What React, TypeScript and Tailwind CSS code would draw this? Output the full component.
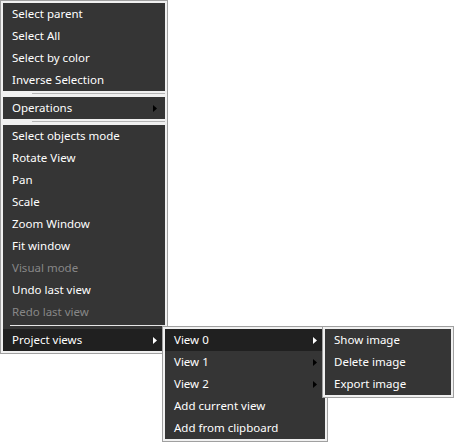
import React from "react";

type Item = { label: string; disabled?: boolean; sub?: boolean; active?: boolean };

const Arrow = ({ active }: { active?: boolean }) => (
  <svg width="4" height="7" viewBox="0 0 4 7" className="ml-auto shrink-0">
    <polygon points="0,0 4,3.5 0,7" fill={active ? "#ffffff" : "#000000"} />
  </svg>
);

const Row = ({ item }: { item: Item }) => (
  <div
    className={`flex items-center h-[22px] pl-[9px] pr-[8px] ${item.active ? "bg-[#202020]" : ""} ${
      item.disabled ? "text-[#878787]" : "text-white"
    }`}
  >
    <span className="leading-[22px] whitespace-nowrap">{item.label}</span>
    {item.sub && <Arrow active={item.active} />}
  </div>
);

const Group = ({ items }: { items: Item[] }) => (
  <div className="bg-[#353535]">
    {items.map((it) => (
      <Row key={it.label} item={it} />
    ))}
  </div>
);

const Sep = () => (
  <div className="h-[6px] pt-[2px] pl-[29px] bg-[#f0f0f0]">
    <div className="h-px bg-[#b4b4b4]" />
  </div>
);

const Panel = ({ children, className }: { children: React.ReactNode; className?: string }) => (
  <div className={`border border-[#a0a0a0] bg-[#f0f0f0] p-[2px] ${className ?? ""}`}>{children}</div>
);

export default function App() {
  return (
    <div
      className="relative w-[454px] h-[442px] bg-white text-[11.5px]"
      style={{ fontFamily: '"Noto Sans", "Open Sans", sans-serif' }}
    >
      <Panel className="w-[168px]">
        <Group
          items={[
            { label: "Select parent" },
            { label: "Select All" },
            { label: "Select by color" },
            { label: "Inverse Selection" },
          ]}
        />
        <Sep />
        <Group items={[{ label: "Operations", sub: true }]} />
        <Sep />
        <Group
          items={[
            { label: "Select objects mode" },
            { label: "Rotate View" },
            { label: "Pan" },
            { label: "Scale" },
            { label: "Zoom Window" },
            { label: "Fit window" },
            { label: "Visual mode", disabled: true },
            { label: "Undo last view" },
            { label: "Redo last view", disabled: true },
          ]}
        />
        <div className="h-[6px] pt-[2px] pl-[7px] bg-[#353535]">
          <div className="h-px bg-[#e6e6e6]" />
        </div>
        <Group items={[{ label: "Project views", sub: true, active: true }]} />
      </Panel>

      {/* Project views submenu */}
      <Panel className="absolute left-[162px] top-[326px] w-[166px]">
        <Group
          items={[
            { label: "View 0", sub: true, active: true },
            { label: "View 1", sub: true },
            { label: "View 2", sub: true },
            { label: "Add current view" },
            { label: "Add from clipboard" },
          ]}
        />
      </Panel>

      {/* View 0 submenu */}
      <Panel className="absolute left-[322px] top-[326px] w-[132px]">
        <Group items={[{ label: "Show image" }, { label: "Delete image" }, { label: "Export image" }]} />
      </Panel>
    </div>
  );
}
